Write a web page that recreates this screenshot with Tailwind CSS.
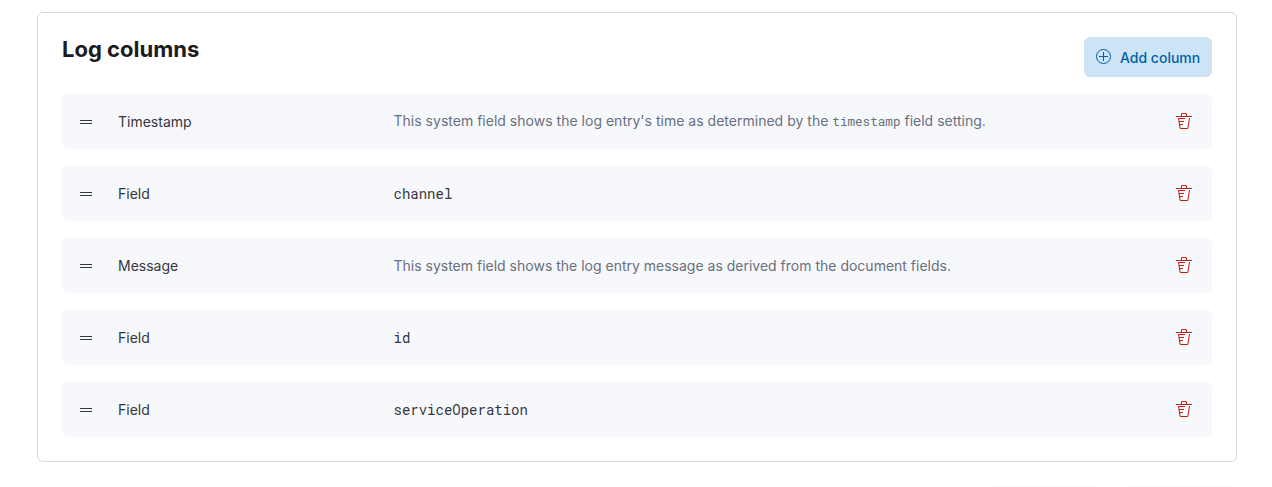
<!DOCTYPE html>
<html lang="en">
<head>
<meta charset="utf-8">
<title>Log columns</title>
<script src="https://cdn.jsdelivr.net/npm/@tailwindcss/browser@4"></script>
</head>
<body class="h-[487px] overflow-hidden bg-white font-[Inter,sans-serif] text-sm text-[#343741]">
<svg class="hidden">
  <symbol id="grab" viewBox="0 0 16 16"><path fill="currentColor" d="M2 6h12v1H2zM2 9h12v1H2z"/></symbol>
  <symbol id="trash" viewBox="0 0 16 16"><path fill="currentColor" fill-rule="evenodd" d="M11 3h5v1H0V3h5V1a1 1 0 0 1 1-1h4a1 1 0 0 1 1 1v2Zm-7.056 8H7v1H4.1l.392 2.519c.042.269.254.458.493.458h6.03c.239 0 .451-.189.493-.458l1.498-9.576H14l-1.504 9.73c-.116.747-.74 1.304-1.481 1.304h-6.03c-.741 0-1.365-.557-1.481-1.304l-1.511-9.73H9V5.95H3.157L3.476 8H8v1H3.632l.312 2ZM6 3h4V1H6v2Z"/></symbol>
</svg>
<section class="mx-[37px] mt-3 h-[450px] w-[1200px] rounded-md border border-[#d3dae6] p-6">
  <header class="flex h-10 items-start justify-between">
    <h2 class="text-[22px] leading-6 font-bold text-[#1a1c21]">Log columns</h2>
    <button class="flex h-10 w-32 items-center rounded-md bg-[#cce4f5] pl-3 font-medium text-[#0061a6]">
      <svg class="mb-0.5 size-4" viewBox="0 0 16 16" fill="none" stroke="currentColor"><circle cx="7.5" cy="8.5" r="7"/><path d="M7.5 4v9M3 8.5h9"/></svg>
      <span class="ml-2 pt-0.5">Add column</span>
    </button>
  </header>
  <div class="mt-4 flex flex-col gap-4">
    <div class="flex h-14 items-center rounded-md bg-[#f7f8fc] px-4">
      <svg class="mt-0.5 size-4"><use href="#grab"/></svg>
      <div class="ml-6 w-[275.5px] pt-0.5">Timestamp</div>
      <div class="flex-1 tracking-[0.014px] text-[#69707d]">This system field shows the log entry's time as determined by the <code class="font-['Roboto_Mono','Liberation_Mono',monospace] text-[12.6px]">timestamp</code> field setting.</div>
      <svg class="mr-1 size-4 text-[#bd271e]"><use href="#trash"/></svg>
    </div>
    <div class="flex h-14 items-center rounded-md bg-[#f7f8fc] px-4">
      <svg class="mt-0.5 size-4"><use href="#grab"/></svg>
      <div class="ml-6 w-[275.5px] pt-0.5">Field</div>
      <code class="flex-1 pt-0.5 font-['Roboto_Mono','Liberation_Mono',monospace] text-sm">channel</code>
      <svg class="mr-1 size-4 text-[#bd271e]"><use href="#trash"/></svg>
    </div>
    <div class="flex h-14 items-center rounded-md bg-[#f7f8fc] px-4">
      <svg class="mt-0.5 size-4"><use href="#grab"/></svg>
      <div class="ml-6 w-[275.5px] pt-0.5">Message</div>
      <div class="flex-1 pt-0.5 text-[#69707d]">This system field shows the log entry message as derived from the document fields.</div>
      <svg class="mr-1 size-4 text-[#bd271e]"><use href="#trash"/></svg>
    </div>
    <div class="flex h-14 items-center rounded-md bg-[#f7f8fc] px-4">
      <svg class="mt-0.5 size-4"><use href="#grab"/></svg>
      <div class="ml-6 w-[275.5px] pt-0.5">Field</div>
      <code class="flex-1 pt-0.5 font-['Roboto_Mono','Liberation_Mono',monospace] text-sm">id</code>
      <svg class="mr-1 size-4 text-[#bd271e]"><use href="#trash"/></svg>
    </div>
    <div class="flex h-14 items-center rounded-md bg-[#f7f8fc] px-4">
      <svg class="mt-0.5 size-4"><use href="#grab"/></svg>
      <div class="ml-6 w-[275.5px] pt-0.5">Field</div>
      <code class="flex-1 pt-0.5 font-['Roboto_Mono','Liberation_Mono',monospace] text-sm">serviceOperation</code>
      <svg class="mr-1 size-4 text-[#bd271e]"><use href="#trash"/></svg>
    </div>
  </div>
</section>
<footer class="mt-6 mr-[39px] flex justify-end gap-[31px]">
  <div class="h-px w-[105px] bg-[#f5f6f7]"></div>
  <div class="h-px w-[105px] bg-[#f5f6f7]"></div>
</footer>
</body>
</html>
